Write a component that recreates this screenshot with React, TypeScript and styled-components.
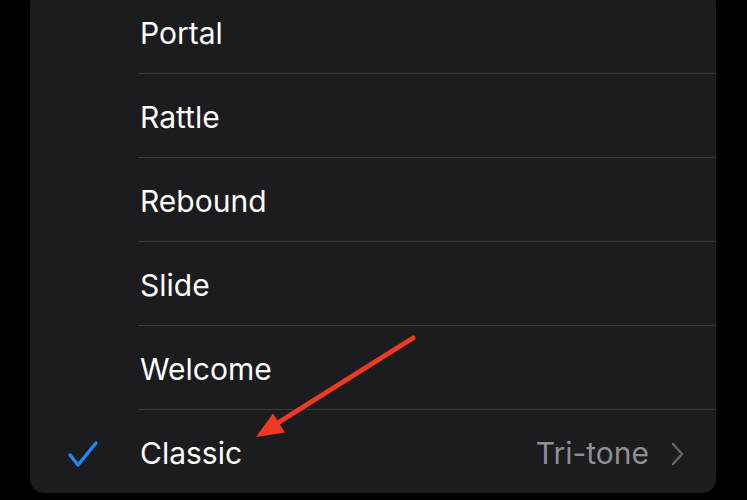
import styled, { createGlobalStyle } from 'styled-components';

const GlobalStyle = createGlobalStyle`
  html, body {
    margin: 0;
    padding: 0;
    background: #000000;
    height: 100%;
    overflow: hidden;
  }
  body {
    font-family: Inter, "Liberation Sans", sans-serif;
    -webkit-font-smoothing: antialiased;
  }
`;

interface ToneItem {
  name: string;
  selected?: boolean;
  detail?: string;
}

// 알림음 목록 (스크롤된 상태라 첫 줄은 위로 살짝 잘림)
const tones: ToneItem[] = [
  { name: 'Portal' },
  { name: 'Rattle' },
  { name: 'Rebound' },
  { name: 'Slide' },
  { name: 'Welcome' },
  { name: 'Classic', selected: true, detail: 'Tri-tone' }
];

const App = () => {
  return (
    <>
      <GlobalStyle />
      <Page>
        <Card>
          {tones.map((tone, i) => (
            <Row key={tone.name}>
              <MarkCell>{tone.selected && <CheckIcon />}</MarkCell>
              <Content $last={i === tones.length - 1}>
                <Label>{tone.name}</Label>
                {tone.detail && (
                  <>
                    <Detail>{tone.detail}</Detail>
                    <ChevronIcon />
                  </>
                )}
              </Content>
            </Row>
          ))}
        </Card>
        <ArrowOverlay viewBox="0 0 747 500" width="747" height="500">
          <line
            x1="413"
            y1="338"
            x2="276"
            y2="424"
            stroke="#ee3a22"
            strokeWidth="5"
            strokeLinecap="round"
          />
          <polygon points="256,437 273,413.5 285,432.5" fill="#ee3a22" />
        </ArrowOverlay>
      </Page>
    </>
  );
};

const CheckIcon = () => (
  <svg width="34" height="30" viewBox="0 0 34 30">
    <path
      d="M3 16 L11 26 L29 4"
      fill="none"
      stroke="#1f87ff"
      strokeWidth="3.4"
      strokeLinecap="round"
      strokeLinejoin="round"
    />
  </svg>
);

const ChevronIcon = () => (
  <ChevronSvg width="14" height="24" viewBox="0 0 14 24">
    <path
      d="M3 2 L12 12 L3 22"
      fill="none"
      stroke="#626267"
      strokeWidth="2.6"
      strokeLinecap="round"
      strokeLinejoin="round"
    />
  </ChevronSvg>
);

const Page = styled.div`
  position: relative;
  width: 747px;
  height: 500px;
  padding: 0 31px 0 30px;
  box-sizing: border-box;
  overflow: hidden;
`;

const Card = styled.div`
  margin-top: -10px;
  background: #1c1c1e;
  border-radius: 14px;
  display: flex;
  flex-direction: column;
`;

const Row = styled.div`
  display: flex;
  align-items: stretch;
`;

const MarkCell = styled.div`
  width: 108px;
  flex-shrink: 0;
  display: flex;
  align-items: center;
  justify-content: center;
  padding-top: 4px;
  box-sizing: border-box;
`;

const Content = styled.div<{ $last: boolean }>`
  flex: 1;
  height: ${(props) => (props.$last ? '83px' : '84px')};
  display: flex;
  align-items: center;
  padding: 3px 32px 0 2px;
  box-sizing: border-box;
  border-bottom: ${(props) => (props.$last ? 'none' : '1px solid #38383a')};
`;

const Label = styled.span`
  flex: 1;
  color: #ffffff;
  font-size: 30px;
`;

const Detail = styled.span`
  color: #8e8e93;
  font-size: 30px;
`;

const ChevronSvg = styled.svg`
  margin-left: 21px;
  margin-top: 1px;
`;

const ArrowOverlay = styled.svg`
  position: absolute;
  top: 0;
  left: 0;
  pointer-events: none;
`;

export default App;
